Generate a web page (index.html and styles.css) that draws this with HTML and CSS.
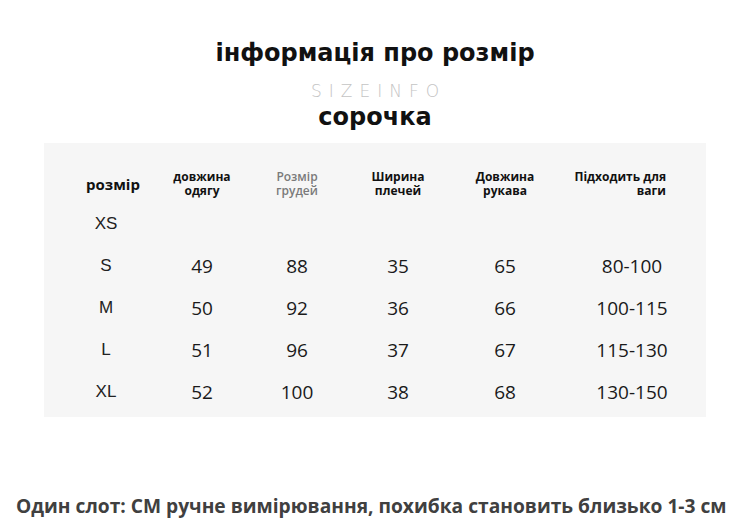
FILE: index.html
```html
<!DOCTYPE html>
<html lang="uk">
<head>
<meta charset="utf-8">
<link rel="stylesheet" href="styles.css">
</head>
<body>
<div class="page">
  <h1 class="title">інформація про розмір</h1>
  <div class="subtitle">SIZEINFO</div>
  <h2 class="product">сорочка</h2>
  <div class="panel">
    <div class="table">
      <div class="row head">
        <div class="cell size-head">розмір</div>
        <div class="cell small">довжина<br>одягу</div>
        <div class="cell small muted">Розмір<br>грудей</div>
        <div class="cell small">Ширина<br>плечей</div>
        <div class="cell small">Довжина<br>рукава</div>
        <div class="cell small fit"><span>Підходить для</span><span class="fit-2">ваги</span></div>
      </div>
      <div class="row">
        <div class="cell size">XS</div><div class="cell"></div><div class="cell"></div><div class="cell"></div><div class="cell"></div><div class="cell"></div>
      </div>
      <div class="row">
        <div class="cell size">S</div><div class="cell num">49</div><div class="cell num">88</div><div class="cell num">35</div><div class="cell num">65</div><div class="cell num">80-100</div>
      </div>
      <div class="row">
        <div class="cell size">M</div><div class="cell num">50</div><div class="cell num">92</div><div class="cell num">36</div><div class="cell num">66</div><div class="cell num">100-115</div>
      </div>
      <div class="row">
        <div class="cell size">L</div><div class="cell num">51</div><div class="cell num">96</div><div class="cell num">37</div><div class="cell num">67</div><div class="cell num">115-130</div>
      </div>
      <div class="row">
        <div class="cell size">XL</div><div class="cell num">52</div><div class="cell num">100</div><div class="cell num">38</div><div class="cell num">68</div><div class="cell num">130-150</div>
      </div>
    </div>
  </div>
  <p class="note">Один слот: CM ручне вимірювання, похибка становить близько 1-3 см</p>
</div>
</body>
</html>
```

FILE: styles.css
```css
* { box-sizing: border-box; }
html, body { margin: 0; padding: 0; background: #ffffff; }
body { width: 750px; height: 530px; overflow: hidden; font-family: "Open Sans", "Noto Sans", sans-serif; color: #111; }
.page { display: flex; flex-direction: column; align-items: center; padding-top: 37px; }
.title { margin: 0; font-family: "DejaVu Sans", sans-serif; font-weight: bold; font-size: 24px; line-height: 32px; color: #111; }
.subtitle { margin-top: 12px; font-family: "DejaVu Sans", sans-serif; font-weight: 200; font-size: 17px; line-height: 20px; letter-spacing: 7px; color: #c4c4c4; padding-left: 7px; }
.product { margin: 0; margin-top: -1px; font-family: "DejaVu Sans", sans-serif; font-weight: bold; font-size: 24px; line-height: 34px; color: #111; }
.panel { align-self: flex-start; margin-left: 44px; margin-top: 9px; width: 662px; height: 274px; background: #f6f6f6; padding-top: 22px; }
.table { display: flex; flex-direction: column; }
.row { display: grid; grid-template-columns: 124px 68px 122px 80px 134px 120px; height: 42px; align-items: center; }
.row.head { height: 38px; }
.cell { text-align: center; }
.size-head { font-weight: bold; font-size: 15px; color: #111; padding-left: 14px; }
.small { font-weight: bold; font-size: 12px; line-height: 14px; color: #111; }
.muted { color: #7a7a7a; font-weight: 600; }
.fit { display: flex; flex-direction: column; align-items: flex-end; padding-right: 26px; white-space: nowrap; }
.size { font-family: "Liberation Sans", Arial, sans-serif; font-size: 17px; color: #222; }
.num { font-size: 19px; color: #1a1a1a; }
.note { margin: 0; margin-top: 75px; align-self: flex-start; margin-left: 16px; font-weight: bold; font-size: 19.2px; color: #404040; white-space: nowrap; }
```
